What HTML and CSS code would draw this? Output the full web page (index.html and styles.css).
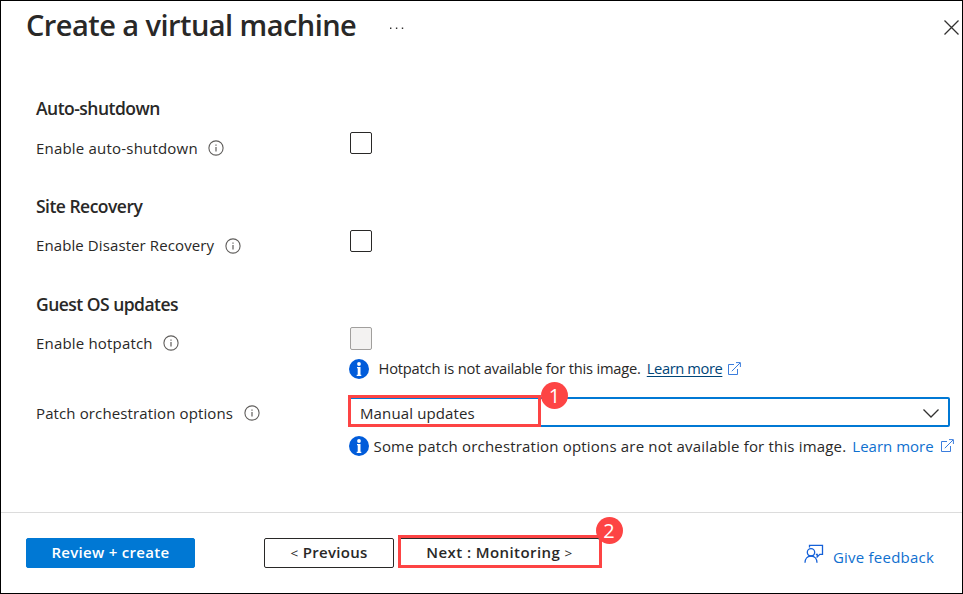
FILE: index.html
```html
<!DOCTYPE html>
<html lang="en">
<head>
<meta charset="utf-8">
<title>Create a virtual machine</title>
<link rel="stylesheet" href="styles.css">
</head>
<body>
<svg class="defs" aria-hidden="true">
  <symbol id="info" viewBox="0 0 16 16"><circle cx="8" cy="8" r="7.100" fill="none" stroke="#605e5c" stroke-width="1.1"/><path d="M8 7v4.6M8 4.4v1.3" stroke="#605e5c" stroke-width="1.2"/></symbol>
  <symbol id="notice" viewBox="0 0 20 20"><circle cx="10" cy="10" r="10" fill="#015cda"/><circle cx="10" cy="5" r="1.9" fill="#fff"/><path d="M8 8h3.500v7.700h.8V17H7.700v-1.300h1V9.300H8z" fill="#fff"/></symbol>
  <symbol id="external" viewBox="0 0 13 13"><path d="M6 2.500H.5v10h9V7M3.800 9.200L12 1M8 .6h4.400V5" fill="none" stroke="#3b7ddd" stroke-width="1"/></symbol>
</svg>
<div class="page">
  <header class="header">
    <h1>Create a virtual machine</h1>
    <svg class="more" viewBox="0 0 15 3"><path d="M1 .5h1.4v1.4H1zM6.9 .5h1.4v1.4H6.9zM12.8 .5h1.4v1.4h-1.4z" fill="#323130"/></svg>
    <svg class="close" viewBox="0 0 15 15"><path d="M.5.5l14 14M14.500.5l-14 14" stroke="#323130" stroke-width="1.3"/></svg>
  </header>
  <main class="form">
    <section class="section">
      <h2>Auto-shutdown</h2>
      <div class="row">
        <div class="label"><span class="l-auto">Enable auto-shutdown</span><svg class="info"><use href="#info"/></svg></div>
        <div class="check"></div>
      </div>
    </section>
    <section class="section">
      <h2>Site Recovery</h2>
      <div class="row">
        <div class="label up"><span class="l-site">Enable Disaster Recovery</span><svg class="info"><use href="#info"/></svg></div>
        <div class="check"></div>
      </div>
    </section>
    <section class="section last">
      <h2>Guest OS updates</h2>
      <div class="row">
        <div class="label raised"><span class="l-hot">Enable hotpatch</span><svg class="info"><use href="#info"/></svg></div>
        <div class="check disabled"></div>
      </div>
      <div class="notice first"><svg class="dot"><use href="#notice"/></svg><span>Hotpatch is not available for this image.</span><a class="dark">Learn more</a><svg class="ext"><use href="#external"/></svg></div>
      <div class="row select-row">
        <div class="label"><span class="l-patch">Patch orchestration options</span><svg class="info"><use href="#info"/></svg></div>
        <div class="select"><span class="value">Manual updates</span><svg class="chevron" viewBox="0 0 16 9"><path d="M.5.5L8 8l7.500-7.500" fill="none" stroke="#323130" stroke-width="1.3"/></svg>
          <div class="mark mark-select"></div><div class="badge badge-one">1</div>
        </div>
      </div>
      <div class="notice second"><svg class="dot"><use href="#notice"/></svg><span>Some patch orchestration options are not available for this image.</span><a class="light">Learn more</a><svg class="ext"><use href="#external"/></svg></div>
    </section>
  </main>
  <footer class="footer">
    <button class="btn primary">Review + create</button>
    <button class="btn prev"><span class="arrow">&lt;</span> Previous</button>
    <div class="next-wrap"><button class="btn next">Next : Monitoring <span class="arrow">&gt;</span></button>
      <div class="mark mark-next"></div><div class="badge badge-two">2</div></div>
    <a class="feedback"><svg viewBox="0 0 20 20"><g fill="none" stroke="#1460d8" stroke-width="1.3"><path d="M5.500 3.500V1.300h13v9h-2.700l-2.600 2.600v-2.600h-1.400"/><circle cx="7" cy="8.300" r="3.700"/><path d="M1 18.700c0-4 2.500-6.700 6-6.700s6 2.700 6 6.700"/></g></svg><span>Give feedback</span></a>
  </footer>
</div>
</body>
</html>
```
FILE: styles.css
```css
* { box-sizing: border-box; }
body { margin: 0; background: #fff; color: #292827; font: 15px/20px "Open Sans", "Noto Sans", sans-serif; }
.defs { position: absolute; width: 0; height: 0; }
svg { flex: none; }
.page { width: 963px; height: 594px; border: 1px solid #000; display: flex; flex-direction: column; overflow: hidden; }
.header { height: 95px; display: flex; align-items: flex-start; padding: 4px 2px 0 25px; }
h1 { margin: 0; width: 363px; font-size: 29px; line-height: 40px; font-weight: 560; letter-spacing: -0.55px; white-space: nowrap; }
.more { width: 15px; height: 3px; margin-top: 22px; }
.close { width: 15px; height: 15px; margin: 15px 1px 0 auto; }
.form { padding-left: 35px; flex: 1; }
.section { height: 98px; }
.section.last { height: auto; }
h2 { margin: 0 0 11px; font-size: 17.5px; line-height: 24px; font-weight: 560; letter-spacing: -0.52px; white-space: nowrap; }
.row { display: flex; height: 34px; }
.label { width: 314px; display: flex; align-items: center; white-space: nowrap; }
.label.up { padding-bottom: 3px; }
.label.up .info { position: relative; top: 1px; }
.label.raised { padding-bottom: 2px; }
.l-auto { letter-spacing: 0.2px; }
.l-site { letter-spacing: 0.1px; }
.l-hot { letter-spacing: 0.18px; }
.l-patch { letter-spacing: 0.12px; }
.value { letter-spacing: 0.13px; }
.info { width: 16px; height: 16px; margin-left: 10.5px; }
.check { width: 22px; height: 22px; margin-top: 1px; border: 1px solid #292827; border-radius: 2px; }
.check.disabled { height: 23px; margin-top: 0; background: #f3f2f1; border-color: #a19f9d; }
.notice { display: flex; align-items: center; height: 22px; margin-left: 313px; white-space: nowrap; }
.notice.first { margin-top: -3px; font-size: 14.7px; letter-spacing: -0.2px; }
.notice.second { margin-top: 8px; }
.notice.second span { letter-spacing: 0.18px; }
.dot { width: 20px; height: 20px; }
.notice.first .dot { margin-right: 9.5px; }
.notice.second .dot { margin-right: 4.5px; }
.notice.first span, .notice.first a { padding-bottom: 2px; }
.notice a { margin: 0 6px; }
.notice a.dark { color: #004578; text-decoration: underline; text-underline-offset: 2px; letter-spacing: -0.4px; }
.notice a.light { color: #0f70cf; margin-right: 7px; }
.ext { width: 13px; height: 13px; margin-bottom: 2px; }
.select-row { height: 30px; margin-top: 17px; }
.select-row .label { width: 312px; padding-top: 2px; }
.select { position: relative; width: 602px; height: 30px; border: 2px solid #0078d4; border-radius: 2px; display: flex; align-items: center; justify-content: space-between; padding: 2px 9px 0 10px; }
.chevron { width: 16px; height: 9px; }
.mark { position: absolute; border: 3px solid #fd4444; }
.mark-select { left: -2px; top: -4px; width: 193px; height: 32px; }
.badge { position: absolute; width: 27px; height: 27px; border-radius: 50%; background: #fd4444; color: #fff; text-align: center; font: 20px/27px "Open Sans", sans-serif; }
.badge-one { left: 191px; top: -17px; }
.footer { height: 81px; border-top: 1px solid #dcdcdc; display: flex; align-items: flex-start; padding: 25px 28px 0 25px; }
.btn { height: 30px; padding: 0 0 2px; border: 1px solid #292827; border-radius: 2px; background: #fff; color: #292827; font: 560 15px/26px "Open Sans", sans-serif; letter-spacing: 0.3px; white-space: nowrap; }
.arrow { font-size: 13.5px; font-weight: 400; }
.primary { width: 169px; background: #0078d4; border-color: #0078d4; color: #fff; font-weight: 600; }
.prev { width: 130px; margin-left: 69px; }
.next-wrap { position: relative; margin-left: 5px; }
.next { width: 201px; letter-spacing: 0.42px; }
.mark-next { left: -1px; top: -3px; width: 204px; height: 33px; }
.badge-two { left: 196.5px; top: -21.5px; }
.feedback { display: flex; margin-left: auto; color: #0f70cf; white-space: nowrap; padding-top: 5px; letter-spacing: 0.22px; }
.feedback svg { width: 20px; height: 20px; margin: 1px 9px 0 0; }
.feedback span { padding-top: 4px; }
```
